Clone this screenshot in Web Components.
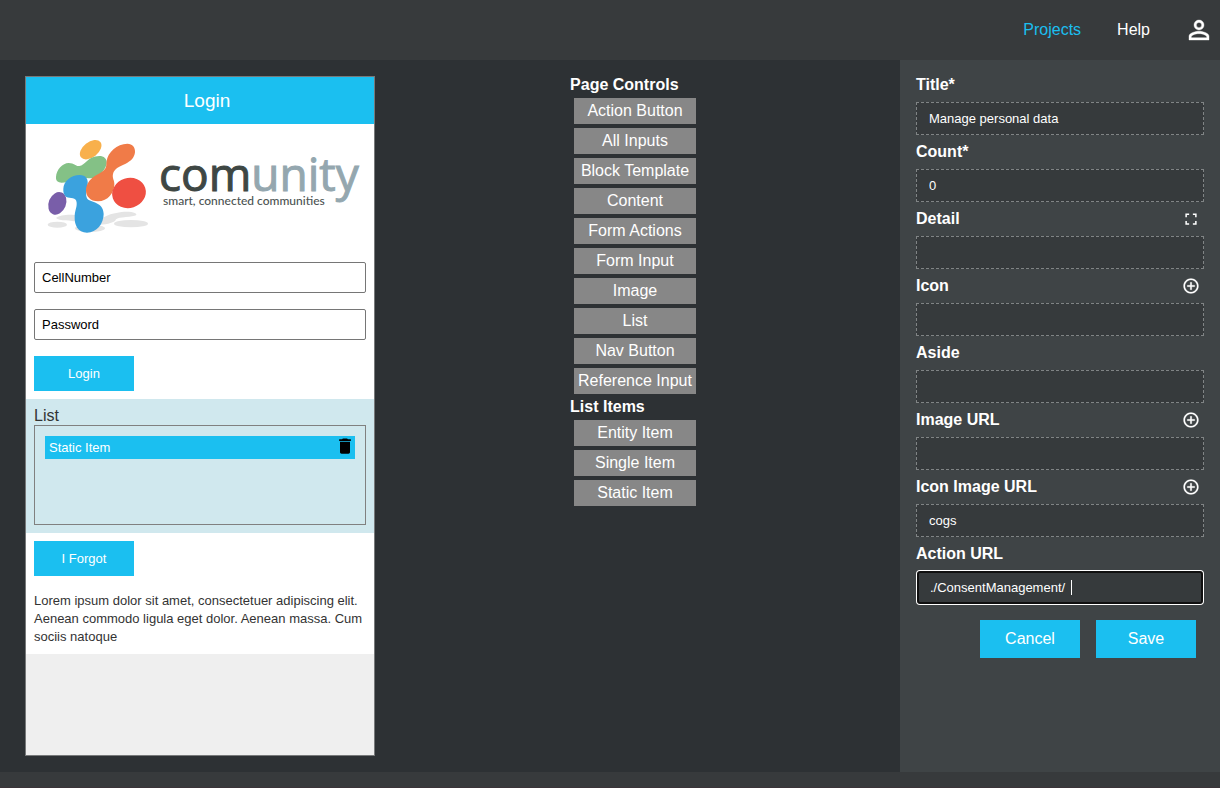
<!DOCTYPE html>
<html lang="en">
<head>
<meta charset="utf-8">
<meta name="viewport" content="width=device-width, initial-scale=1">
<title>Page designer</title>
<style>
html, body { margin: 0; min-height: 100%; }
body { font: 16px/18px "Liberation Sans", Arial, sans-serif; color: #fff; background: #2d3134; --accent: #1bbff0; --bar: #373a3c; --panel: #3f4446; --field: #363a3c; }
</style>
</head>
<body>
<designer-app></designer-app>
<script>
class Base extends HTMLElement {
  connectedCallback() {
    if (this.shadowRoot) return;
    this.attachShadow({ mode: 'open' }).innerHTML = '<style>*{box-sizing:border-box}</style>' + this.render();
  }
}

customElements.define('top-bar', class extends Base {
  render() {
    return `<style>
      :host { display: block; background: var(--bar); }
      nav { display: flex; align-items: center; justify-content: flex-end; gap: 36px; height: 60px; padding-right: 6px; }
      a { color: #fff; text-decoration: none; }
      a.active { color: var(--accent); }
      a.user { display: flex; margin-left: -2px; }
    </style>
    <nav>
      <a class="active" href="#projects">Projects</a>
      <a href="#help">Help</a>
      <a class="user" href="#account" aria-label="Account"><svg width="30" height="30" viewBox="0 0 24 24" fill="currentColor" stroke="currentColor" stroke-width=".3"><path d="M12 5.9a2.1 2.1 0 1 1 0 4.2 2.1 2.1 0 0 1 0-4.2m0 9c2.97 0 6.1 1.46 6.1 2.1v1.1H5.9V17c0-.64 3.13-2.1 6.1-2.1M12 4a4 4 0 1 0 0 8 4 4 0 0 0 0-8m0 9c-2.67 0-8 1.34-8 4v3h16v-3c0-2.66-5.33-4-8-4"/></svg></a>
    </nav>`;
  }
});

customElements.define('action-button', class extends Base {
  render() {
    return `<style>
      :host { display: inline-flex; }
      button { width: 100px; height: 35px; padding: 0; border: 0; background: var(--accent); color: #fff; font: 500 13px/18px "Liberation Sans", Arial, sans-serif; }
      :host([large]) button { height: 38px; font-size: 16px; }
    </style><button type="button"><slot></slot></button>`;
  }
});

customElements.define('brand-logo', class extends Base {
  render() {
    return `<style>
      :host { display: block; }
      svg { display: block; width: 100%; }
      .name { font-family: "Open Sans", "Noto Sans", sans-serif; }
      .tag { font-family: Lato, "Open Sans", sans-serif; font-weight: 500; }
    </style>
    <svg viewBox="26 124 348 138" role="img" aria-label="comunity">
      <g transform="translate(40 135) scale(.33333)">
        <g fill="#e4e4e4">
          <ellipse cx="52" cy="269" rx="29" ry="9"/>
          <path d="M48 249C60 239 98 236 115 243V262C92 253 58 260 48 249Z"/>
          <path d="M175 262C190 243 210 236 245 231C278 228 294 236 288 241C280 246 235 246 228 253C225 263 200 270 175 269Z"/>
          <ellipse cx="273" cy="266" rx="51" ry="11"/>
          <ellipse cx="150" cy="280" rx="45" ry="11"/>
        </g>
        <ellipse cx="152" cy="44" rx="37" ry="23" transform="rotate(-38 152 44)" fill="#f8b04c"/>
        <path d="M48 126C49 104 68 84 86 84C104 84 105 94 118 93C135 92 143 63 178 63C191 63 202 71 200 85C199 99 184 120 166 127C153 133 139 127 119 128C93 128 89 143 65 143C54 143 47 137 48 126Z" fill="#84c186"/>
        <ellipse cx="52" cy="205" rx="26" ry="35" transform="rotate(22 52 205)" fill="#795ea9"/>
        <path d="M70 161C71 138 94 120 119 120C138 120 145 132 143 148C140 166 135 181 142 191C151 202 191 200 191 237C191 266 170 293 141 293C113 293 103 269 104 246C104 226 111 218 110 203C109 185 91 191 79 186C72 181 69 171 70 161Z" fill="#3ba2de"/>
        <path d="M200 78C203 53 231 26 262 26C278 26 286 37 285 52C283 69 272 79 257 86C239 94 223 100 219 117C216 130 224 136 223 150C222 173 204 199 174 199C151 199 138 185 138 166C138 145 153 128 171 119C205 102 197 94 200 78Z" fill="#f07b48"/>
        <ellipse cx="267" cy="174" rx="51" ry="45" transform="rotate(-18 267 174)" fill="#ef4f42"/>
      </g>
      <text class="name" x="159" y="191" font-size="46" fill="#3e4744" stroke="#3e4744">com<tspan fill="#94a7af" stroke="#94a7af">unity</tspan></text>
      <text class="tag" x="163" y="205" font-size="12" fill="#4c5352">smart, connected communities</text>
    </svg>`;
  }
});

customElements.define('phone-preview', class extends Base {
  render() {
    return `<style>
      :host { display: flex; flex-direction: column; border: 1px solid #77797a; background: #efefef; color: #333; }
      header { height: 47px; padding-left: 14px; background: var(--accent); color: #fff; font-size: 19px; line-height: 47px; text-align: center; }
      .page { background: #fff; }
      .form { display: grid; gap: 16px; padding: 0 8px 8px; justify-items: start; }
      input { width: 100%; height: 31px; padding: 0 7px; border: 1px solid #767676; border-radius: 2px; background: #fff; color: #000; font: 13px/18px "Liberation Sans", Arial, sans-serif; }
      .list { padding: 8px; background: #d0e8ee; }
      h2 { margin: 0; font-weight: 400; font-size: 16px; line-height: 18px; }
      .drop { height: 100px; padding: 10px; border: 1px solid #808080; }
      .item { display: flex; align-items: center; justify-content: space-between; height: 23px; padding-left: 4px; background: var(--accent); color: #fff; font-weight: 500; font-size: 13px; }
      .item button { display: flex; align-self: flex-start; padding: 0; border: 0; background: none; color: #000; }
      .foot { display: grid; gap: 16px; padding: 8px; justify-items: start; font-size: 13px; }
      p { margin: 0; }
    </style>
    <header>Login</header>
    <div class="page">
      <brand-logo></brand-logo>
      <div class="form">
        <input type="text" aria-label="Cell number" value="CellNumber">
        <input type="text" aria-label="Password" value="Password">
        <action-button>Login</action-button>
      </div>
      <section class="list">
        <h2>List</h2>
        <div class="drop"><div class="item"><span>Static Item</span>
          <button type="button" aria-label="Delete"><svg width="20" height="20" viewBox="0 0 24 24" fill="currentColor"><path d="M6 19.500c0 1 .8 1.700 1.800 1.700h8.400c1 0 1.800-.7 1.800-1.700V7H6v12.500zM19 4h-3.500l-1-1h-5l-1 1H5v2h14V4z"/></svg></button>
        </div></div>
      </section>
      <div class="foot">
        <action-button>I Forgot</action-button>
        <p>Lorem ipsum dolor sit amet, consectetuer adipiscing elit. Aenean commodo ligula eget dolor. Aenean massa. Cum sociis natoque</p>
      </div>
    </div>`;
  }
});

customElements.define('control-group', class extends Base {
  render() {
    const items = this.getAttribute('items').split(',').map(t => `<button type="button">${t}</button>`).join('');
    return `<style>
      :host { display: grid; gap: 4px; }
      h2 { margin: 0; font-size: 16px; line-height: 18px; }
      button { height: 26px; margin: 0 4px; padding: 0 4px; border: 0; background: #878787; color: #fff; font: 16px/18px "Liberation Sans", Arial, sans-serif; white-space: nowrap; }
    </style><h2><slot></slot></h2>${items}`;
  }
});

customElements.define('prop-field', class extends Base {
  render() {
    const icons = {
      expand: '<path d="M5.500 9.500v-4h4M14.500 5.500h4v4M18.500 14.500v4h-4M9.500 18.500h-4v-4" fill="none" stroke="currentColor" stroke-width="2"/>',
      add: '<path d="M13 7h-2v4H7v2h4v4h2v-4h4v-2h-4V7zm-1-5C6.480 2 2 6.480 2 12s4.480 10 10 10 10-4.480 10-10S17.520 2 12 2zm0 18c-4.410 0-8-3.590-8-8s3.590-8 8-8 8 3.590 8 8-3.590 8-8 8z" stroke="currentColor" stroke-width=".3"/>'
    };
    const icon = this.getAttribute('icon');
    const label = this.getAttribute('label');
    return `<style>
      :host { display: grid; gap: 8px; }
      .head { display: flex; align-items: center; justify-content: space-between; height: 18px; padding-right: 4px; }
      label { font-weight: 700; }
      .head button { display: flex; padding: 0; border: 0; background: none; color: #fff; }
      .box { position: relative; }
      input { display: block; width: 100%; height: 33px; padding: 0 12px; border: 1px dashed #808485; background: var(--field); color: #fff; font: 500 13px/18px "Liberation Sans", Arial, sans-serif; outline: 0; }
      :host([current]) input { padding: 0 11px; border: 2px solid #101010; border-radius: 3px; box-shadow: 0 0 0 1px #fff; }
      :host([current]) .box { padding: 0 1px; }
      .caret { position: absolute; left: 155px; top: 9px; width: 1px; height: 15px; background: #fff; }
    </style>
    <div class="head"><label for="f">${label}</label>${icon ? `<button type="button" aria-label="${icon} ${label}"><svg width="18" height="18" viewBox="0 0 24 24" fill="currentColor">${icons[icon]}</svg></button>` : ''}</div>
    <div class="box"><input id="f" type="text" value="${this.getAttribute('value') || ''}">${this.hasAttribute('current') ? '<span class="caret"></span>' : ''}</div>`;
  }
});

customElements.define('prop-panel', class extends Base {
  render() {
    return `<style>
      :host { display: block; padding: 16px; background: var(--panel); }
      form { display: grid; gap: 8px; }
      .actions { display: flex; justify-content: flex-end; gap: 16px; padding: 8px 8px 0 0; }
    </style>
    <form>
      <prop-field label="Title*" value="Manage personal data"></prop-field>
      <prop-field label="Count*" value="0"></prop-field>
      <prop-field label="Detail" icon="expand"></prop-field>
      <prop-field label="Icon" icon="add"></prop-field>
      <prop-field label="Aside"></prop-field>
      <prop-field label="Image URL" icon="add"></prop-field>
      <prop-field label="Icon Image URL" icon="add" value="cogs"></prop-field>
      <prop-field label="Action URL" value="./ConsentManagement/" current></prop-field>
      <div class="actions"><action-button large>Cancel</action-button><action-button large>Save</action-button></div>
    </form>`;
  }
});

customElements.define('designer-app', class extends Base {
  render() {
    return `<style>
      :host { display: grid; grid-template-rows: auto 1fr auto; min-height: 100vh; }
      main { display: grid; grid-template-columns: 370px 1fr 320px; }
      phone-preview { width: 350px; min-height: 680px; margin: 16px 0 16px 25px; }
      .palette { display: flex; flex-direction: column; align-items: center; padding-top: 16px; }
      .palette div { display: grid; gap: 4px; }
      footer { height: 16px; background: var(--bar); border-bottom: 1px solid #3b3439; }
    </style>
    <top-bar></top-bar>
    <main>
      <phone-preview></phone-preview>
      <div class="palette"><div>
        <control-group items="Action Button,All Inputs,Block Template,Content,Form Actions,Form Input,Image,List,Nav Button,Reference Input">Page Controls</control-group>
        <control-group items="Entity Item,Single Item,Static Item">List Items</control-group>
      </div></div>
      <prop-panel></prop-panel>
    </main>
    <footer></footer>`;
  }
});
</script>
</body>
</html>
